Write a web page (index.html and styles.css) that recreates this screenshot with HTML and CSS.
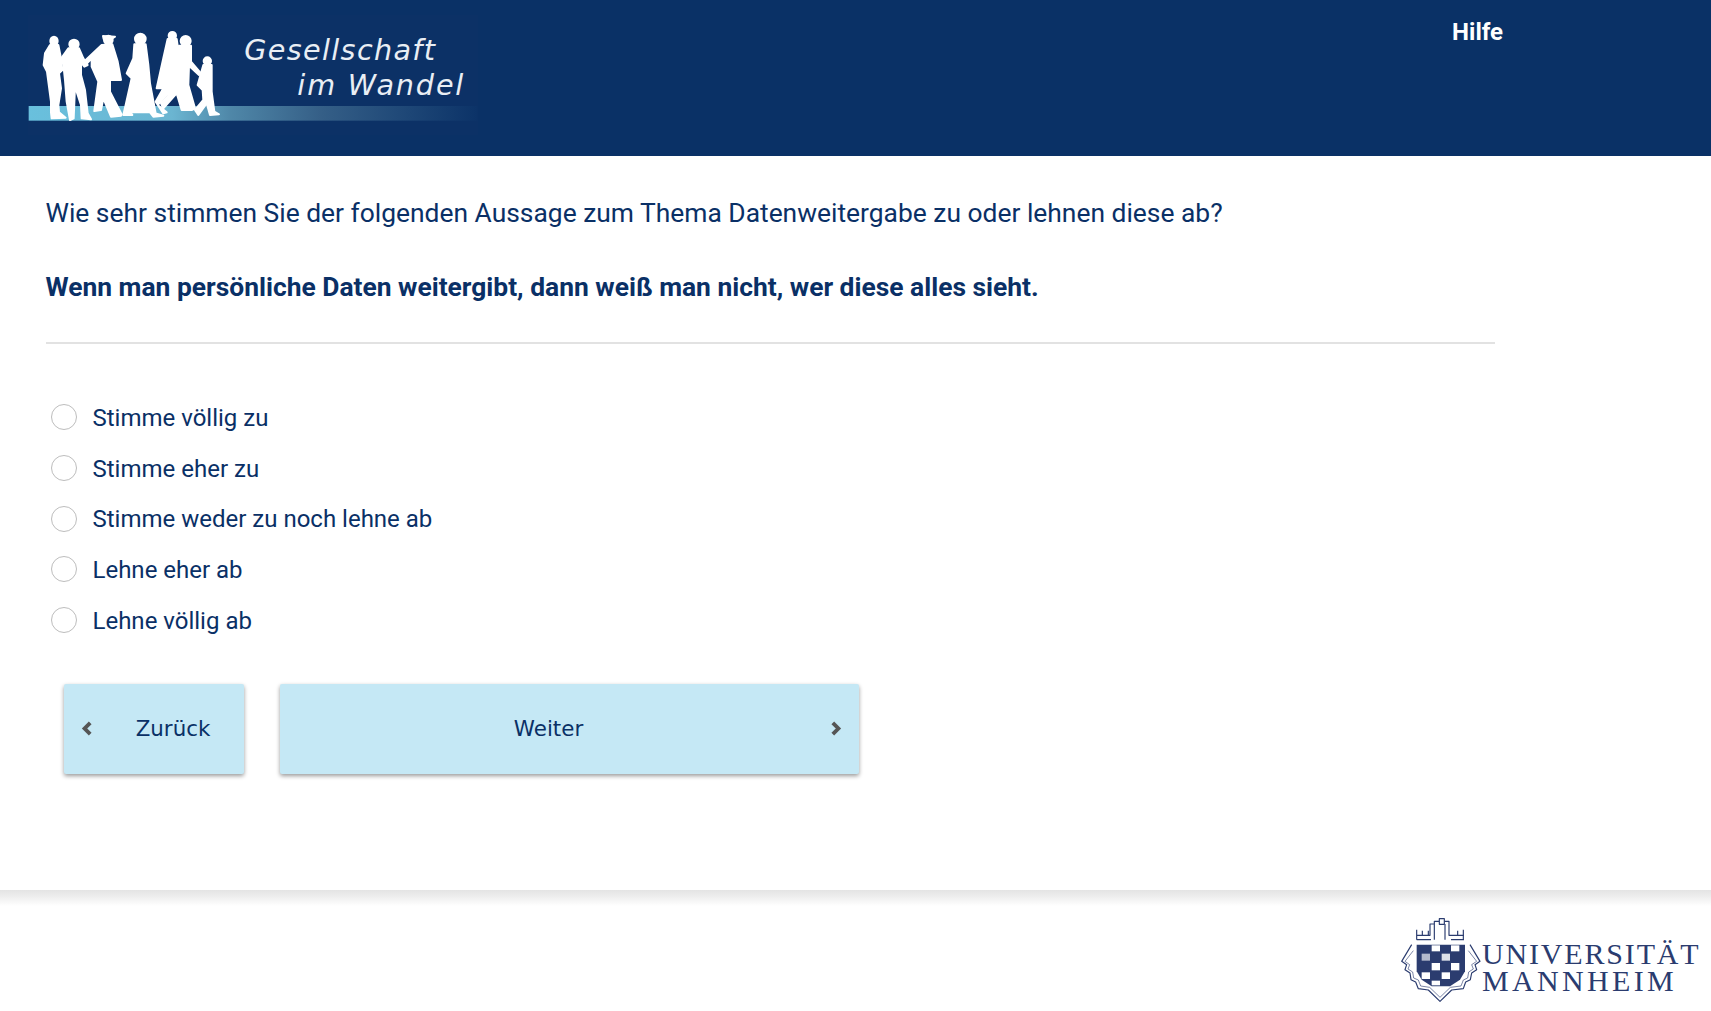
FILE: index.html
```html
<!DOCTYPE html>
<html lang="de">
<head>
<meta charset="utf-8">
<title>Gesellschaft im Wandel</title>
<link rel="stylesheet" href="styles.css">
</head>
<body>
<header class="top">
  <svg class="logo" viewBox="84 45 1350 360" role="img" aria-label="Gesellschaft im Wandel">
    <defs>
      <linearGradient id="bar" x1="0" x2="1" y1="0" y2="0">
        <stop offset="0" stop-color="#69c0dd"/>
        <stop offset="0.32" stop-color="#6bb5d1"/>
        <stop offset="0.45" stop-color="#4f87a8"/>
        <stop offset="0.65" stop-color="#355f87"/>
        <stop offset="0.85" stop-color="#1d4676"/>
        <stop offset="1" stop-color="#0c3368"/>
      </linearGradient>
    </defs>
    <rect x="84" y="45" width="1350" height="360" fill="#0c3166"/>
    <rect x="86" y="318" width="1346" height="44" fill="url(#bar)"/>
    <g transform="translate(105 75)" fill="#fff" stroke="#fff" stroke-width="6" stroke-linejoin="round">
      <ellipse cx="57" cy="48" rx="11" ry="13"/>
      <path d="M45 60L70 60L78 100L82 135L72 145L78 190L70 240L72 262L92 278L50 280L48 262L48 230L40 170L36 140L26 120L30 85Z"/>
      <circle cx="117" cy="58" r="14"/>
      <path d="M100 70L132 70L145 100L158 120L148 125L138 112L138 150L150 195L158 265L168 283L140 280L138 240L120 185L116 280L105 285L95 230L90 165L85 118L75 105Z"/>
      <circle cx="220" cy="45" r="13"/>
      <path d="M204 33L240 35L232 40L206 42Z"/>
      <path d="M200 60L232 58L248 110L258 165L225 165L225 200L260 268L258 272L228 275L205 220L198 255L178 258L190 170L170 125L170 100L150 122L145 112Z"/>
      <circle cx="316" cy="42" r="16"/>
      <path d="M298 58L332 58L340 120L345 175L362 265L385 272L355 275L345 262L285 262L292 270L265 270L272 240L290 160L275 145L295 100Z"/>
      <circle cx="412" cy="32" r="11"/>
      <path d="M398 42L425 42L432 90L440 130L430 185L425 200L395 210L368 240L395 262L385 265L362 230L385 190L365 190L385 100Z"/>
      <circle cx="452" cy="48" r="15"/>
      <path d="M432 62L468 62L468 110L498 145L492 150L462 122L460 180L480 250L470 255L440 255L425 205L385 250L378 235L420 190L425 110Z"/>
      <circle cx="517" cy="108" r="11"/>
      <path d="M505 120L530 120L530 200L538 260L552 268L525 270L515 235L490 270L480 255L505 225L503 195L488 180L498 145Z"/>
    </g>
    <text class="logo-text" x="733" y="180" textLength="572">Gesellschaft</text>
    <text class="logo-text" x="892" y="284" textLength="498">im Wandel</text>
  </svg>
  <a class="help" href="#">Hilfe</a>
</header>

<main class="content">
  <p class="question">Wie sehr stimmen Sie der folgenden Aussage zum Thema Datenweitergabe zu oder lehnen diese ab?</p>
  <p class="statement">Wenn man persönliche Daten weitergibt, dann weiß man nicht, wer diese alles sieht.</p>
  <hr class="rule">
  <ul class="options">
    <li class="option"><span class="radio"></span><span class="option-label">Stimme völlig zu</span></li>
    <li class="option"><span class="radio"></span><span class="option-label">Stimme eher zu</span></li>
    <li class="option"><span class="radio"></span><span class="option-label">Stimme weder zu noch lehne ab</span></li>
    <li class="option"><span class="radio"></span><span class="option-label">Lehne eher ab</span></li>
    <li class="option"><span class="radio"></span><span class="option-label">Lehne völlig ab</span></li>
  </ul>
  <div class="actions">
    <button class="btn btn-back" type="button">
      <svg class="chev" viewBox="0 0 10 14"><path d="M7 3.500L3.500 7L7 10.500"/></svg>
      <span class="btn-label">Zurück</span>
    </button>
    <button class="btn btn-next" type="button">
      <span class="btn-label">Weiter</span>
      <svg class="chev" viewBox="0 0 10 14"><path d="M3 3.500L6.500 7L3 10.500"/></svg>
    </button>
  </div>
</main>

<footer class="bottom">
  <svg class="uma" viewBox="60 80 900 255" role="img" aria-label="Universität Mannheim">
    <g transform="translate(45 60)">
      <g fill="none" stroke="#2b3c6f" stroke-width="3.500" stroke-linejoin="round">
        <path d="M65 85H108M65 72H105V38H118V30H132M148 30H162V72H207M168 85H207M65 55V85M82 58V72M100 58V72M188 58V72M205 55V85M118 38V85M150 38V85"/>
        <rect x="133" y="22" width="15" height="17"/>
        <path d="M50 100L20 150L35 160L30 175L45 185L48 205L62 212L70 232L100 236L135 270L170 236L205 232L212 212L226 205L230 185L245 175L240 160L255 150L225 100"/>
        <path d="M55 118L30 150L44 160L39 173L53 182L56 200L70 206L77 224L104 228L135 258L166 228L198 224L205 206L218 200L221 182L235 173L230 160L245 150L220 118" stroke-width="2.500" opacity=".75"/>
      </g>
      <path d="M65 100H210V180L195 205L165 225H110L80 205L65 180Z" fill="#2b3c6f"/>
      <g fill="#fff">
        <rect x="110" y="102" width="25" height="18"/><rect x="168" y="102" width="25" height="18"/>
        <rect x="80" y="127" width="25" height="21" opacity=".65"/><rect x="140" y="127" width="25" height="21" opacity=".85"/>
        <rect x="110" y="155" width="25" height="22"/><rect x="168" y="155" width="25" height="22"/>
        <rect x="80" y="183" width="25" height="20"/><rect x="140" y="183" width="25" height="20"/>
        <rect x="110" y="208" width="25" height="14"/>
      </g>
    </g>
    <text class="uma-text" x="306" y="219" textLength="650">UNIVERSITÄT</text>
    <text class="uma-text" x="306" y="298" textLength="575">MANNHEIM</text>
  </svg>
</footer>
</body>
</html>
```
FILE: styles.css
```css
* { box-sizing: border-box; }
html, body { margin: 0; padding: 0; }
body {
  height: 1011px;
  overflow: hidden;
  background: #fff;
  color: #0a3066;
  font-family: Roboto, "Liberation Sans", sans-serif;
  display: flex;
  flex-direction: column;
}
.top {
  height: 156px;
  flex: none;
  background: #0a3166;
  display: flex;
  justify-content: space-between;
  align-items: flex-start;
  padding: 15px 208px 0 28px;
}
.logo { width: 450px; height: 120px; display: block; }
.logo-text {
  font-family: "DejaVu Sans", "Open Sans", sans-serif;
  font-style: italic;
  font-size: 86px;
  fill: #e9eef4;
}
.help {
  color: #fff;
  font-weight: 700;
  font-size: 24px;
  line-height: 34px;
  text-decoration: none;
}
.content { flex: 1; padding: 0 0 0 45.500px; }
.question {
  margin: 39px 0 0;
  font-size: 26.400px;
  line-height: 36px;
}
.statement {
  margin: 38px 0 0;
  font-size: 26.400px;
  line-height: 36px;
  font-weight: 700;
}
.rule {
  width: 1449px;
  margin: 37px 0 0 .500px;
  border: 0;
  height: 2px;
  background: #e2e2e2;
}
.options { list-style: none; margin: 48px 0 0; padding: 0; }
.option {
  height: 50.700px;
  display: flex;
  align-items: center;
  font-size: 24px;
}
.option-label { margin-top: 1px; }
.radio {
  width: 26px;
  height: 26px;
  margin: 0 16px 0 5px;
  border: 1.500px solid #bdbdbd;
  border-radius: 50%;
  background: #fff;
  flex: none;
}
.actions { display: flex; gap: 36px; margin: 38.500px 0 0 18.500px; }
.btn {
  height: 90px;
  border: 0;
  border-radius: 2px;
  background: #c5e8f5;
  color: #0a3066;
  box-shadow: 0 2px 4px rgba(0, 0, 0, .4);
  font-family: "DejaVu Sans", Verdana, sans-serif;
  font-size: 21.400px;
  display: flex;
  align-items: center;
  padding: 0 15px 0 15px;
}
.btn-back { width: 180px; }
.btn-next { width: 579px; }
.btn-label { flex: 1; text-align: center; }
.btn-back .btn-label { padding-left: 22px; }
.btn-next .btn-label { padding-right: 26px; }
.chev { width: 16px; height: 23px; flex: none; }
.chev path { fill: none; stroke: #555; stroke-width: 2.400; }
.bottom {
  flex: none;
  height: 121px;
  background: linear-gradient(#e4e4e4, #ebebeb 5px, #fff 16px) no-repeat top / 100% 16px;
  display: flex;
  justify-content: flex-end;
  align-items: flex-start;
  padding: 28px 11px 0 0;
}
.uma { width: 300px; height: 85px; display: block; }
.uma-text {
  font-family: "Liberation Serif", serif;
  font-size: 90px;
  fill: #2b3c6f;
}
```
